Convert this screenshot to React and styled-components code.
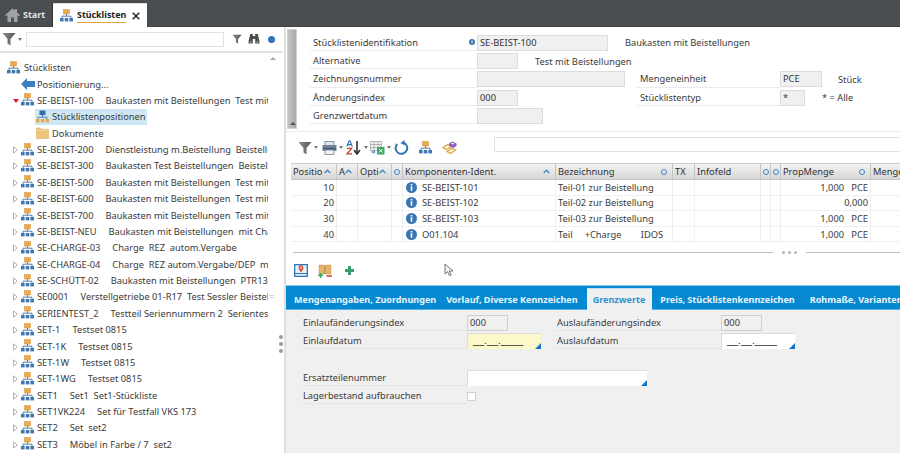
import React from 'react';
import styled, { createGlobalStyle } from 'styled-components';

const Global = createGlobalStyle`
  html, body { margin: 0; padding: 0; width: 900px; height: 453px; overflow: hidden; background: #fff; }
  body { font-family: "Noto Sans", "Liberation Sans", sans-serif; font-size: 9.3px; color: #3a3a3a; }
  * { box-sizing: border-box; }
  svg { flex: none; }
`;

const Page = styled.div`display: flex; flex-direction: column; width: 900px; height: 453px; overflow: hidden;`;

const TabBar = styled.div`display: flex; align-items: flex-end; height: 27px; flex: none; background: #4b4e50; padding-left: 5px; border-bottom: 1px solid #3f4244;`;
const StartTab = styled.div`display: flex; align-items: center; gap: 3px; width: 48px; height: 23px; color: #e4e4e4; font-weight: 700; font-size: 9px; border-right: 1px solid #333;`;
const ActiveTab = styled.div`display: flex; align-items: center; height: 24px; width: 94px; margin-bottom: -1px; padding-left: 7px; background: #fff; color: #222; font-weight: 700; font-size: 8.900px; border-top: 1px solid #ddd;`;
const ActiveLabel = styled.span`margin-left: 4px; padding-bottom: 1px; border-bottom: 1px solid #e8a33b; line-height: 12px;`;
const CloseMark = styled.svg`margin-left: 6px;`;

const Body = styled.div`display: flex; flex: 1; min-height: 0;`;

const LeftPane = styled.div`position: relative; flex: 0 0 286px; display: flex; flex-direction: column; border-right: 2px solid #dedede; min-width: 0;`;
const SearchBar = styled.div`display: flex; align-items: center; height: 26px; flex: none; padding: 0 0 0 2px; border-bottom: 2px solid #e3e3e3; margin-right: 1px;`;
const Caret = styled.span`display: inline-block; width: 0; height: 0; margin-left: 2px; border-left: 2.500px solid transparent; border-right: 2.500px solid transparent; border-top: 3px solid #777;`;
const SearchInput = styled.div`width: 198px; height: 15px; margin-left: 4px; border: 1px solid #e2e2e2;`;
const SearchTools = styled.div`display: flex; align-items: center; gap: 6px; margin-left: 8px;`;
const Dot = styled.span`width: 7px; height: 7px; margin-left: 2px; border-radius: 50%; background: #2f73bd;`;
const Tree = styled.div`flex: 1; padding-top: 7px; min-height: 0; overflow: hidden;`;
const TreeRow = styled.div`display: flex; align-items: center; height: 16.380px; width: 268px; padding-left: ${p => p.$indent}px; white-space: pre; overflow: hidden; svg { margin-bottom: 2px; }`;
const Selected = styled.div`display: flex; align-items: center; flex: none; height: 16px; padding: 0 1px; margin-left: -1px; background: #cfe7f3;`;
const Twisty = styled.span`flex: 0 0 11px; display: flex; justify-content: center; svg { margin-bottom: 0; }`;
const Open = styled.span`width: 0; height: 0; margin-left: 1px; border-left: 3.500px solid transparent; border-right: 3.500px solid transparent; border-top: 4px solid #d5202b;`;
const TreeText = styled.span`flex: none; margin-left: ${p => p.$gap ?? 3}px; line-height: 16px;`;
const TreeCode = styled.span`margin-right: 12px;`;
const ScrollUp = styled.span`position: absolute; left: 270px; top: 30px; width: 0; height: 0; border-left: 3px solid transparent; border-right: 3px solid transparent; border-bottom: 3px solid #a8a8a8;`;
const ScrollGrip = styled.span`position: absolute; left: 269px; top: 263px; color: #aaa; font-size: 9px;`;
const SplitDots = styled.div`position: absolute; left: 279px; top: 308px; display: flex; flex-direction: column; gap: 3px;`;
const SplitDot = styled.span`width: 4px; height: 4px; border-radius: 50%; background: #9a9a9a;`;

const RightPane = styled.div`flex: 1; min-width: 0; display: flex; flex-direction: column; overflow: hidden;`;
const FormArea = styled.div`display: flex; flex: none; height: 104px; padding-top: 2px;`;
const Collapse = styled.div`position: relative; flex: none; width: 10px; height: 100px; margin-left: 1px; background: linear-gradient(90deg,#c4c4c4,#a9a9a9); border: 1px solid #d0d0d0;`;
const CollapseArrow = styled.span`position: absolute; left: 2px; bottom: 3px; width: 0; height: 0; border-left: 3px solid transparent; border-right: 3px solid transparent; border-bottom: 3px solid #555;`;
const Form = styled.div`flex: 1; padding: 3.500px 0 0 13px;`;
const FormRow = styled.div`display: flex; align-items: stretch; height: 18.350px;`;
const FLabel = styled.div`flex: 0 0 ${p => p.$w}px; display: flex; align-items: center; padding: 2px 0 0 3px; border-bottom: 1px solid #ececec; margin-left: ${p => p.$ml || 0}px;`;
const Field = styled.div`flex: none; width: ${p => p.$w}px; height: 16px; margin-top: 2.300px; padding-left: 2px; background: #f0f0f0; border: 1px solid #dcdcdc; line-height: 14px; color: #333;`;
const Note = styled.div`display: flex; align-items: center; padding-top: 2px; margin-left: ${p => p.$ml}px; white-space: pre;`;
const InfoSmall = styled.span`margin-left: auto; margin-right: 2px; display: flex;`;

const Tools = styled.div`display: flex; align-items: center; flex: none; height: 32px; padding: 0 0 0 12px; border-top: 1px solid #ececec;`;
const ToolBtn = styled.span`display: inline-flex; align-items: center; margin-right: ${p => p.$mr}px;`;
const ToolInput = styled.div`align-self: flex-start; margin-top: 5px; width: 420px; height: 15px; margin-left: 37px; flex: none; border: 1px solid #e2e2e2; border-right: 0;`;

const GridBox = styled.div`flex: none; margin-left: 5px;`;
const cols = '46px 21px 34px 11px 153px 117px 22px 66px 10px 10px 90px 60px';
const HeadRow = styled.div`display: grid; grid-template-columns: ${cols}; height: 17px; background: linear-gradient(#f3f3f3,#d6d6d6); border-top: 1px solid #cfcfcf; border-bottom: 1px solid #c4c4c4; white-space: nowrap;`;
const HeadCell = styled.div`display: flex; align-items: center; justify-content: space-between; padding: 0 ${p => p.$narrow ? 1 : 5}px 0 2px; border-right: 1px solid #c4c4c4; overflow: hidden; color: #333;`;
const DataRow = styled.div`display: grid; grid-template-columns: ${cols}; height: 15.600px; border-bottom: 1px solid #f0f0f0; white-space: pre;`;
const Cell = styled.div`display: flex; align-items: center; justify-content: ${p => p.$right ? 'flex-end' : 'flex-start'}; padding: 0 2px; border-right: 1px solid #f0f0f0; overflow: hidden;`;
const HRing = styled.span`flex: none; width: 6px; height: 6px; border-radius: 50%; border: 1.500px solid #3f86c6;`;
const Info = styled.svg`margin: 0 5px 0 1px;`;

const Splitter = styled.div`display: flex; align-items: center; flex: none; height: 12px; margin: 4px 0 0 7px;`;
const SplitLine = styled.div`flex: 0 0 ${p => p.$w}px; height: 1px; background: #bdbdbd;`;
const SplitMark = styled.div`display: flex; gap: 3px; margin: 0 9px;`;
const SplitPip = styled.span`width: 3px; height: 3px; border-radius: 50%; background: #b5b5b5;`;

const Actions = styled.div`position: relative; display: flex; align-items: center; flex: none; height: 27px; padding: 0 0 2px 8px;`;
const ActionSlot = styled.span`display: flex; margin-right: ${p => p.$mr}px;`;
const Pointer = styled.svg`position: absolute; left: 158px; top: 5px;`;

const BlueTabs = styled.div`display: flex; align-items: stretch; flex: none; height: 25px; background: #0689d1; color: #e8f4fb; font-weight: 700; font-size: 9.050px; white-space: nowrap; border-bottom: 1px solid #5bb2e2; border-top: 1px solid #8cc9ec;`;
const BlueTab = styled.div`display: flex; align-items: center; padding: ${p => p.$pad}; margin-top: 3px; ${p => p.$active ? 'background:#f0f0f0;color:#2f93d2;margin-top:2px;margin-bottom:-1px;border-top:1px solid #bfe0f3;' : ''}`;
const TabSep = styled.span`align-self: center; width: 1px; height: 14px; margin-top: 2px; background: #58b0e2;`;

const Detail = styled.div`flex: 1; background: #f0f0f0; padding: 3px 0 0 15px;`;
const DRow = styled.div`display: flex; align-items: stretch; height: 18px; margin-bottom: ${p => p.$mb || 0}px;`;
const DLabel = styled.div`flex: 0 0 ${p => p.$w}px; display: flex; align-items: center; padding: 2px 0 0 2px; border-bottom: 1px solid #e6e6e6; margin-left: ${p => p.$ml || 0}px;`;
const DField = styled.div`position: relative; flex: none; width: ${p => p.$w}px; height: 16px; margin-top: 2px; padding-left: 2px; line-height: 14px; background: ${p => p.$bg}; border: ${p => p.$edge ? '1px solid #cfcfcf' : '0'}; ${p => p.$edge ? '' : 'border-top:1px solid #dcdcdc;border-left:1px solid #dcdcdc;'}`;
const Corner = styled.span`position: absolute; right: 0; bottom: 0; width: 0; height: 0; border-left: 6px solid transparent; border-bottom: 6px solid #1274c4;`;
const Check = styled.div`flex: none; width: 9px; height: 9px; margin-top: 6px; background: #fff; border: 1px solid #d0d0d0;`;
const DateMask = styled.span`font-family: "Liberation Sans", sans-serif; font-size: 10px; color: #222; padding-left: 3px;`;

const Org = ({ size = 13 }) => (
  <svg width={size} height={size} viewBox="0 0 13 13">
    <rect x="3.500" y="0.500" width="6" height="4.500" fill="#e9a94c" stroke="#d6913a" strokeWidth=".5" />
    <path d="M6.500 5v2M2 9V7.200h9V9" stroke="#557fae" fill="none" />
    <rect x="0" y="9" width="3.600" height="3.400" fill="#3f78b5" />
    <rect x="4.700" y="9" width="3.600" height="3.400" fill="#3f78b5" />
    <rect x="9.400" y="9" width="3.600" height="3.400" fill="#3f78b5" />
  </svg>
);
const SelOrg = () => (
  <svg width="13" height="13" viewBox="0 0 13 13">
    <rect x="3.500" y="0.500" width="6" height="4.500" fill="#2f6fb0" />
    <path d="M6.500 5v2M2 9V7.200h9V9" stroke="#557fae" fill="none" />
    <rect x="0" y="9" width="3.600" height="3.400" fill="#e9a94c" />
    <rect x="4.700" y="9" width="3.600" height="3.400" fill="#e9a94c" />
    <rect x="9.400" y="9" width="3.600" height="3.400" fill="#e9a94c" />
  </svg>
);
const Closed = () => (
  <svg width="5" height="8" viewBox="0 0 5 8"><path d="M.5.800L4.300 4 .5 7.200z" fill="#fff" stroke="#a8a8a8" strokeWidth=".9" /></svg>
);
const Funnel = ({ s = 14 }) => (
  <svg width={s} height={s} viewBox="0 0 14 14">
    <defs><linearGradient id="fg" x1="0" x2="1"><stop offset="0" stopColor="#8e8e8e" /><stop offset="1" stopColor="#555" /></linearGradient></defs>
    <path d="M0.500 1h13L8.500 7v6.500L5.500 11.500V7z" fill="url(#fg)" />
  </svg>
);
const Binoc = () => (
  <svg width="12" height="12" viewBox="0 0 12 12" fill="#4d4d4d">
    <path d="M2.200 1h2.600v2h2.400V1h2.600l1.600 7v2.500H7.200V6H4.800v4.500H.6V8z" />
    <circle cx="2.700" cy="9" r="1" fill="#9b9b9b" /><circle cx="9.300" cy="9" r="1" fill="#9b9b9b" />
  </svg>
);
const Home = () => (
  <svg width="15" height="14" viewBox="0 0 15 14" fill="#a2a2a2">
    <path d="M7.500 0.500L0 7.200l.9 1L2.500 7v7h3.600V9.500h2.800V14h3.600V7l1.600 1.200.9-1L12 4.200V1h-2v1.500z" />
  </svg>
);
const Folder = () => (
  <svg width="13" height="12" viewBox="0 0 13 12">
    <path d="M0.500 1h4l1 1.300h7V11.500H0.500z" fill="#efc27a" stroke="#d9a458" strokeWidth=".5" />
    <path d="M0.500 3.200h12" stroke="#fae1b5" strokeWidth=".7" />
  </svg>
);
const BackArrow = () => (
  <svg width="14" height="12" viewBox="0 0 14 12"><path d="M0 6l6-6v3h8v6H6v3z" fill="#3d7fc0" /></svg>
);
const InfoIcon = () => (
  <Info width="11" height="11" viewBox="0 0 11 11">
    <circle cx="5.500" cy="5.500" r="5.500" fill="#3a76b4" />
    <rect x="4.700" y="2" width="1.600" height="1.500" fill="#fff" />
    <rect x="4.700" y="4.300" width="1.600" height="4.500" fill="#fff" />
  </Info>
);
const Up = () => (
  <svg width="7" height="5" viewBox="0 0 7 5"><path d="M.7 4L3.500 1.200 6.300 4" stroke="#3f86c6" strokeWidth="1.300" fill="none" /></svg>
);
const Printer = () => (
  <svg width="15" height="14" viewBox="0 0 15 14">
    <rect x="3" y="0.500" width="9" height="4" fill="#dfe7ef" stroke="#5d7186" strokeWidth=".7" />
    <rect x="0.500" y="4" width="14" height="6" fill="#6e8296" />
    <rect x="1" y="7" width="13" height="1" fill="#3f5266" />
    <rect x="3" y="9" width="9" height="4.500" fill="#f2f2f2" stroke="#5d7186" strokeWidth=".7" />
  </svg>
);
const Sort = () => (
  <svg width="16" height="15" viewBox="0 0 16 15">
    <path d="M.8 6.500L3.200.7h.8l2.300 5.800M1.700 4.600h3.700" stroke="#2f6fb0" strokeWidth="1.100" fill="none" />
    <path d="M1 8.300h4.800L1 13.800h5" stroke="#c83a30" strokeWidth="1.200" fill="none" />
    <path d="M11 1v12M8 10l3 4 3-4" stroke="#333" strokeWidth="1.600" fill="none" />
  </svg>
);
const Excel = () => (
  <svg width="15" height="14" viewBox="0 0 15 14">
    <path d="M.5.500h11v9h-11zM.5 3.500h11M.5 6.500h11M4 .5v9M8 .5v9" stroke="#9a9a9a" strokeWidth=".7" fill="#f5f5f5" />
    <rect x="7" y="6" width="7.500" height="7.500" fill="#3fa65f" />
    <path d="M9 8l3.500 3.500M12.500 8L9 11.500" stroke="#fff" />
    <path d="M1 11h4M3.500 9.500L5 11l-1.500 1.500" stroke="#3a76b4" fill="none" />
  </svg>
);
const Refresh = () => (
  <svg width="15" height="15" viewBox="0 0 15 15">
    <path d="M9.500 2.600A5.800 5.800 0 1 1 3.200 4" stroke="#2f74b8" strokeWidth="2" fill="none" />
    <path d="M10.500 0v5.500L6.500 3z" fill="#2f74b8" />
  </svg>
);
const Links = () => (
  <svg width="15" height="14" viewBox="0 0 15 14">
    <path d="M1 6.500l5-3 3.500 2-5 3z" fill="#fff" stroke="#e2a23e" strokeWidth="1.300" />
    <path d="M5 10.500l5-3 3.500 1.500-5 3.500z" fill="#fff" stroke="#e2a23e" strokeWidth="1.300" />
    <path d="M7 2.500l3.500-2 4 2v2.500l-3.500 2-4-2z" fill="#8a5fc0" />
    <path d="M9 2.500l1.500-.8 2 .9-1.500 .9z" fill="#fff" />
  </svg>
);
const MapPin = () => (
  <svg width="14" height="13" viewBox="0 0 14 13">
    <path d="M.7.700h12.600v11.600H.7z" fill="#e9f1f8" stroke="#2f74b8" strokeWidth="1.300" />
    <path d="M7 8.500C5 6 4.500 5 4.500 3.800a2.500 2.500 0 0 1 5 0C9.500 5 9 6 7 8.500z" fill="#d8503f" />
    <circle cx="7" cy="3.800" r=".9" fill="#fff" />
    <path d="M.7 9.500h12.600" stroke="#2f74b8" />
  </svg>
);
const Book = () => (
  <svg width="14" height="14" viewBox="0 0 14 14">
    <path d="M1 1h5l1 1 1-1h5v9H1z" fill="#e3b469" stroke="#c9974c" strokeWidth=".5" />
    <path d="M7 2v8" stroke="#a98044" />
    <path d="M0 11.300h5M2.500 9v5" stroke="#3fa65f" strokeWidth="1.600" />
    <path d="M8.500 12h5.500" stroke="#cf4a3c" strokeWidth="1.600" />
  </svg>
);
const Plus = () => (
  <svg width="9" height="9" viewBox="0 0 9 9"><path d="M3 0h3v3h3v3H6v3H3V6H0V3h3z" fill="#38a06b" /></svg>
);

const items = [
  ['SE-BEIST-200', 'Dienstleistung m.Beistellung  Beistellung'],
  ['SE-BEIST-300', 'Baukasten Test Beistellungen  Beistellungen'],
  ['SE-BEIST-500', 'Baukasten mit Beistellungen  Test mit'],
  ['SE-BEIST-600', 'Baukasten mit Beistellungen  Test mit'],
  ['SE-BEIST-700', 'Baukasten mit Beistellungen  Test mit'],
  ['SE-BEIST-NEU', 'Baukasten mit Beistellungen  mit Charge'],
  ['SE-CHARGE-03', 'Charge  REZ  autom.Vergabe'],
  ['SE-CHARGE-04', 'Charge  REZ autom.Vergabe/DEP  mit'],
  ['SE-SCHÜTT-02', 'Baukasten mit Beistellungen  PTR130'],
  ['SE0001', 'Verstellgetriebe 01-R17  Test Sessler Beistellung'],
  ['SERIENTEST_2', 'Testteil Seriennummern 2  Serientest'],
  ['SET-1', 'Testset 0815'],
  ['SET-1K', 'Testset 0815'],
  ['SET-1W', 'Testset 0815'],
  ['SET-1WG', 'Testset 0815'],
  ['SET1', 'Set1  Set1-Stückliste'],
  ['SET1VK224', 'Set für Testfall VKS 173'],
  ['SET2', 'Set  set2'],
  ['SET3', 'Möbel in Farbe / 7  set2'],
];

const heads = [
  ['Positio', 'up'], ['A', 'up'], ['Opti', 'up'], ['', 'ring', true], ['Komponenten-Ident.', 'up'],
  ['Bezeichnung', 'ring'], ['TX', ''], ['Infofeld', ''], ['', 'ring', true], ['', 'ring', true], ['PropMenge', 'ring'], ['Menge', ''],
];
const rows = [
  ['10', 'SE-BEIST-101', 'Teil-01 zur Beistellung', '1,000   PCE'],
  ['20', 'SE-BEIST-102', 'Teil-02 zur Beistellung', '0,000'],
  ['30', 'SE-BEIST-103', 'Teil-03 zur Beistellung', '1,000   PCE'],
  ['40', 'O01.104', 'Teil     +Charge        IDOS', '1,000   PCE'],
];

export default function App() {
  return (
    <Page>
      <Global />
      <TabBar>
        <StartTab><Home />Start</StartTab>
        <ActiveTab>
          <Org />
          <ActiveLabel>Stücklisten</ActiveLabel>
          <CloseMark width="8" height="8" viewBox="0 0 8 8"><path d="M.7.700l6.600 6.600M7.300.700L.7 7.300" stroke="#222" strokeWidth="1.500" /></CloseMark>
        </ActiveTab>
      </TabBar>
      <Body>
        <LeftPane>
          <SearchBar>
            <Funnel />
            <Caret />
            <SearchInput />
            <SearchTools><Funnel s={10} /><Binoc /><Dot /></SearchTools>
          </SearchBar>
          <ScrollUp />
          <Tree>
            <TreeRow $indent={7}><Org /><TreeText $gap={4}>Stücklisten</TreeText></TreeRow>
            <TreeRow $indent={21}><BackArrow /><TreeText $gap={2}>Positionierung...</TreeText></TreeRow>
            <TreeRow $indent={10}><Twisty><Open /></Twisty><Org /><TreeText><TreeCode>SE-BEIST-100</TreeCode>Baukasten mit Beistellungen  Test mit</TreeText></TreeRow>
            <TreeRow $indent={36}><Selected><SelOrg /><TreeText>Stücklistenpositionen</TreeText></Selected></TreeRow>
            <TreeRow $indent={36}><Folder /><TreeText $gap={3}>Dokumente</TreeText></TreeRow>
            {items.map(([a, b]) => (
              <TreeRow key={a} $indent={10}><Twisty><Closed /></Twisty><Org /><TreeText><TreeCode>{a}</TreeCode>{b}</TreeText></TreeRow>
            ))}
          </Tree>
          <ScrollGrip>=</ScrollGrip>
          <SplitDots><SplitDot /><SplitDot /><SplitDot /></SplitDots>
        </LeftPane>
        <RightPane>
          <FormArea>
            <Collapse><CollapseArrow /></Collapse>
            <Form>
              <FormRow>
                <FLabel $w={167}>Stücklistenidentifikation
                  <InfoSmall><svg width="6" height="6" viewBox="0 0 6 6"><circle cx="3" cy="3" r="3" fill="#3a76b4" /><rect x="2.500" y="1.500" width="1" height="3" fill="#fff" /></svg></InfoSmall>
                </FLabel>
                <Field $w={131}>SE-BEIST-100</Field>
                <Note $ml={17}>Baukasten mit Beistellungen</Note>
              </FormRow>
              <FormRow>
                <FLabel $w={167}>Alternative</FLabel>
                <Field $w={41} />
                <Note $ml={17}>Test mit Beistellungen</Note>
              </FormRow>
              <FormRow>
                <FLabel $w={167}>Zeichnungsnummer</FLabel>
                <Field $w={148} />
                <FLabel $w={143} $ml={12}>Mengeneinheit</FLabel>
                <Field $w={42}>PCE</Field>
                <Note $ml={16}>Stück</Note>
              </FormRow>
              <FormRow>
                <FLabel $w={167}>Änderungsindex</FLabel>
                <Field $w={41}>000</Field>
                <FLabel $w={143} $ml={119}>Stücklistentyp</FLabel>
                <Field $w={25}>*</Field>
                <Note $ml={17}>* = Alle</Note>
              </FormRow>
              <FormRow>
                <FLabel $w={167}>Grenzwertdatum</FLabel>
                <Field $w={66} />
              </FormRow>
            </Form>
          </FormArea>
          <Tools>
            <ToolBtn $mr={4}><Funnel /><Caret /></ToolBtn>
            <ToolBtn $mr={3}><Printer /><Caret /></ToolBtn>
            <ToolBtn $mr={2}><Sort /><Caret /></ToolBtn>
            <ToolBtn $mr={3}><Excel /><Caret /></ToolBtn>
            <ToolBtn $mr={10}><Refresh /></ToolBtn>
            <ToolBtn $mr={10}><Org /></ToolBtn>
            <ToolBtn $mr={0}><Links /></ToolBtn>
            <ToolInput />
          </Tools>
          <GridBox>
            <HeadRow>
              {heads.map(([t, k, n], i) => (
                <HeadCell key={i} $narrow={n}>{t}{k === 'up' ? <Up /> : k === 'ring' ? <HRing /> : null}</HeadCell>
              ))}
            </HeadRow>
            {rows.map(r => (
              <DataRow key={r[0]}>
                <Cell $right>{r[0]}</Cell>
                <Cell />
                <Cell />
                <Cell />
                <Cell><InfoIcon />{r[1]}</Cell>
                <Cell>{r[2]}</Cell>
                <Cell />
                <Cell />
                <Cell />
                <Cell />
                <Cell $right>{r[3]}</Cell>
                <Cell />
              </DataRow>
            ))}
          </GridBox>
          <Splitter>
            <SplitLine $w={480} /><SplitMark><SplitPip /><SplitPip /><SplitPip /></SplitMark><SplitLine $w={100} />
          </Splitter>
          <Actions>
            <ActionSlot $mr={10}><MapPin /></ActionSlot>
            <ActionSlot $mr={13}><Book /></ActionSlot>
            <ActionSlot $mr={0}><Plus /></ActionSlot>
            <Pointer width="11" height="14" viewBox="0 0 11 14"><path d="M1 1v10l2.500-2.300 2 4 1.800-.9-2-3.800H9z" fill="#f4f4f4" stroke="#555" strokeWidth=".8" /></Pointer>
          </Actions>
          <BlueTabs>
            <BlueTab $pad="0 2px 0 8px">Mengenangaben, Zuordnungen</BlueTab>
            <TabSep />
            <BlueTab $pad="0 9px 0 8px">Vorlauf, Diverse Kennzeichen</BlueTab>
            <BlueTab $active $pad="0 7px 0 6px">Grenzwerte</BlueTab>
            <BlueTab $pad="0 8px 0 8px">Preis, Stücklistenkennzeichen</BlueTab>
            <TabSep />
            <BlueTab $pad="0 0 0 7px">Rohmaße, Varianten</BlueTab>
          </BlueTabs>
          <Detail>
            <DRow>
              <DLabel $w={166}>Einlaufänderungsindex</DLabel>
              <DField $w={41} $bg="#f0f0f0" $edge>000</DField>
              <DLabel $w={166} $ml={47}>Auslaufänderungsindex</DLabel>
              <DField $w={41} $bg="#f0f0f0" $edge>000</DField>
            </DRow>
            <DRow $mb={19}>
              <DLabel $w={166}>Einlaufdatum</DLabel>
              <DField $w={74} $bg="#fbf9c9"><DateMask>__.__.____</DateMask><Corner /></DField>
              <DLabel $w={166} $ml={14}>Auslaufdatum</DLabel>
              <DField $w={74} $bg="#fff"><DateMask>__.__.____</DateMask><Corner /></DField>
            </DRow>
            <DRow>
              <DLabel $w={166}>Ersatzteilenummer</DLabel>
              <DField $w={180} $bg="#fff"><Corner /></DField>
            </DRow>
            <DRow>
              <DLabel $w={166}>Lagerbestand aufbrauchen</DLabel>
              <Check />
            </DRow>
          </Detail>
        </RightPane>
      </Body>
    </Page>
  );
}
